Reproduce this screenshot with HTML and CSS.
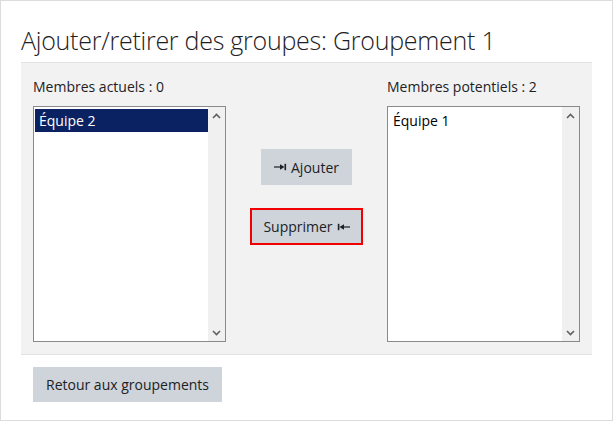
FILE: index.html
```html
<!DOCTYPE html>
<html lang="fr">
<head>
<meta charset="utf-8">
<title>Ajouter/retirer des groupes</title>
<link rel="stylesheet" href="styles.css">
</head>
<body>
<div class="page">
  <h2 class="title">Ajouter/retirer des groupes: Groupement 1</h2>
  <div class="panel">
    <div class="col">
      <label class="lbl">Membres actuels : 0</label>
      <div class="listbox">
        <div class="options">
          <div class="opt selected">Équipe 2</div>
        </div>
        <div class="sbar">
          <svg class="chev" width="9" height="6" viewBox="0 0 9 6"><path d="M1 5 L4.5 1.5 L8 5" fill="none" stroke="#606060" stroke-width="1.6"/></svg>
          <svg class="chev" width="9" height="6" viewBox="0 0 9 6"><path d="M1 1 L4.5 4.5 L8 1" fill="none" stroke="#606060" stroke-width="1.6"/></svg>
        </div>
      </div>
    </div>
    <div class="actions">
      <button class="btn">
        <svg class="arr" width="13" height="8" viewBox="0 0 13 8"><path d="M0 4 H8" stroke="#1d2125" stroke-width="1.2"/><path d="M6 1.3 L10.5 4 L6 6.7 Z" fill="#1d2125"/><rect x="10.5" y="0.8" width="1.6" height="6.4" fill="#1d2125"/></svg>
        Ajouter</button>
      <button class="btn focus">Supprimer
        <svg class="arr" width="13" height="8" viewBox="0 0 13 8"><rect x="0.8" y="0.8" width="1.6" height="6.4" fill="#1d2125"/><path d="M7 1.3 L2.4 4 L7 6.7 Z" fill="#1d2125"/><path d="M5 4 H13" stroke="#1d2125" stroke-width="1.2"/></svg>
      </button>
    </div>
    <div class="col">
      <label class="lbl">Membres potentiels : 2</label>
      <div class="listbox">
        <div class="options">
          <div class="opt">Équipe 1</div>
        </div>
        <div class="sbar">
          <svg class="chev" width="9" height="6" viewBox="0 0 9 6"><path d="M1 5 L4.5 1.5 L8 5" fill="none" stroke="#606060" stroke-width="1.6"/></svg>
          <svg class="chev" width="9" height="6" viewBox="0 0 9 6"><path d="M1 1 L4.5 4.5 L8 1" fill="none" stroke="#606060" stroke-width="1.6"/></svg>
        </div>
      </div>
    </div>
  </div>
  <div class="footer">
    <button class="btn back">Retour aux groupements</button>
  </div>
</div>
</body>
</html>
```
FILE: styles.css
```css
* { box-sizing: border-box; }
html, body { margin: 0; padding: 0; background: #fff; }
body {
  font-family: "Open Sans", "Noto Sans", sans-serif;
  color: #1d2125;
  font-size: 14px;
}
.page {
  width: 613px;
  height: 421px;
  border: 1px solid #dcdcdc;
  padding: 24px 20px 0 20px;
}
.title {
  margin: 0 0 7px 0;
  font-size: 25px;
  font-weight: 300;
  line-height: 30px;
  color: #1d2125;
  letter-spacing: -0.25px;
}
.panel {
  background: #f2f2f2;
  border-top: 1px solid #e3e3e3;
  border-bottom: 1px solid #e3e3e3;
  display: flex;
  justify-content: space-between;
  align-items: stretch;
  padding: 13px 12px 12px 12px;
}
.col {
  display: flex;
  flex-direction: column;
  width: 193px;
}
.lbl {
  display: block;
  line-height: 21px;
  height: 21px;
  margin-bottom: 9px;
  font-size: 14px;
}
.listbox {
  height: 236px;
  border: 1px solid #8a8a8a;
  background: #fff;
  display: flex;
  padding: 2px 0 1px 1px;
}
.options {
  flex: 1;
}
.opt {
  height: 23px;
  line-height: 23px;
  padding-left: 4px;
  font-size: 14px;
  color: #000;
}
.opt.selected {
  background: #0b2262;
  color: #fff;
}
.sbar {
  width: 17px;
  margin-top: -2px;
  margin-bottom: -1px;
  background: #f0f0f0;
  display: flex;
  flex-direction: column;
  justify-content: space-between;
  align-items: center;
  padding: 6px 0 5px 0;
}
.chev { display: block; }
.actions {
  display: flex;
  flex-direction: column;
  align-items: center;
  padding-top: 73px;
  gap: 23px;
}
.btn {
  font-family: inherit;
  font-size: 14px;
  color: #1d2125;
  background: #ced4da;
  border: 0;
  border-radius: 0;
  height: 36px;
  padding: 0 13px;
  display: inline-flex;
  align-items: center;
  gap: 4px;
}
.btn.focus {
  border: 2px solid #f00000;
  height: 37px;
  padding: 0 11px;
}
.arr { display: block; }
.footer {
  padding: 12px 0 0 12px;
}
.btn.back {
  height: 35px;
  padding: 0 13px;
}
```
